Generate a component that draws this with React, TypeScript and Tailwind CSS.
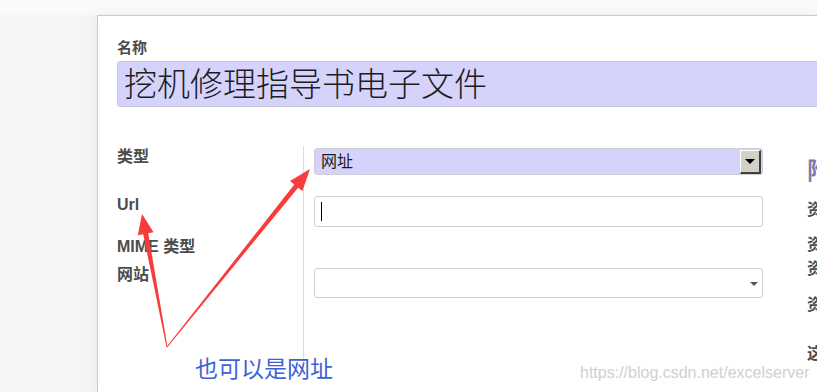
import React from "react";

const font = "font-['Liberation_Sans','Noto_Sans_CJK_SC',sans-serif]";

function Arrows() {
  // two red call-out arrows drawn over the form
  return (
    <svg
      className="pointer-events-none absolute left-0 top-0"
      width="817"
      height="392"
      viewBox="0 0 817 392"
    >
      <polygon
        fill="#f83b3b"
        points="167.5,346.9 148.2,233.2 153.6,232.2 142,214 137.8,235.2 143.2,234.2 166.5,347.1"
      />
      <polygon
        fill="#f83b3b"
        points="167.4,347.3 298.1,187.7 302.4,191.1 310,169 290,181.1 294.3,184.5 166.6,346.7"
      />
    </svg>
  );
}

export default function App() {
  return (
    <div
      className={`relative flex h-[392px] w-[817px] flex-col overflow-hidden bg-[#f6f4f6] ${font}`}
    >
      <div className="h-[15px] shrink-0 bg-[#fcf9fc]" />
      <div className="ml-[97px] flex-1 border-l border-t border-[#cdc9d0] bg-white pl-[19px] pt-[22px] shadow-[0_0_14px_rgba(0,0,0,0.06)]">
        <div className="h-[20px] text-[15px] font-bold leading-[20px] text-[#4c4c4c]">
          名称
        </div>
        <div className="mt-[3px] flex h-[46px] w-[760px] items-center rounded-[3px] border border-[#c9c8d6] bg-[#d5d3fc] pl-[6px] text-[33px] font-light leading-none text-[#1c1c1c]">
          挖机修理指导书电子文件
        </div>

        <div className="mt-[39px] flex">
          <div className="flex w-[186px] shrink-0 flex-col text-[16px] font-bold leading-[20px] text-[#4c4c4c]">
            <div className="mt-[1px]">类型</div>
            <div className="mt-[28px]">Url</div>
            <div className="mt-[22px]">MIME 类型</div>
            <div className="mt-[8px]">网站</div>
          </div>

          <div className="flex shrink-0 flex-col border-l border-[#dcdcdc] pb-[9px] pl-[10px] pt-[2px]">
            <div className="flex h-[27px] w-[449px] items-center justify-between rounded-[3px] border border-[#cfcfd8] bg-[#d5d3fc] pl-[6px] pr-[1px]">
              <span className="text-[16px] text-[#1c1c1c]">网址</span>
              <span className="flex h-[24px] w-[21px] items-center justify-center border-b-2 border-l border-r-2 border-t border-b-[#404040] border-l-white border-r-[#404040] border-t-white bg-[#d4d0c8]">
                <span className="h-0 w-0 border-l-[5px] border-r-[5px] border-t-[5px] border-l-transparent border-r-transparent border-t-black" />
              </span>
            </div>
            <div className="mt-[21px] flex h-[31px] w-[449px] items-center rounded-[3px] border border-[#cfcfcf] pl-[6px]">
              <span className="h-[19px] w-px bg-black" />
            </div>
            <div className="mt-[41px] flex h-[30px] w-[449px] items-center justify-end rounded-[3px] border border-[#cfcfcf] pr-[4px] pt-[2px]">
              <span className="h-0 w-0 border-l-[4px] border-r-[4px] border-t-[4px] border-l-transparent border-r-transparent border-t-[#555]" />
            </div>
          </div>

          <div className="ml-[44px] flex w-[60px] shrink-0 flex-col text-[16px] font-bold leading-[20px] text-[#4c4c4c]">
            <div className="mt-[12px] text-[24px] leading-[26px] text-[#7c7bad]">附件</div>
            <div className="mt-[16px]">资源</div>
            <div className="mt-[15px]">资源</div>
            <div className="mt-[4px]">资源</div>
            <div className="mt-[16px]">资源</div>
            <div className="mt-[29px]">这里</div>
          </div>
        </div>
      </div>

      <Arrows />

      <div className="absolute left-[195px] top-[354px] text-[23px] leading-[30px] text-[#3c62d6]">
        也可以是网址
      </div>
      <div className="absolute left-[580px] top-[363px] text-[16px] leading-[20px] text-[#d0d0d0]">
        https://blog.csdn.net/excelserver
      </div>
    </div>
  );
}
